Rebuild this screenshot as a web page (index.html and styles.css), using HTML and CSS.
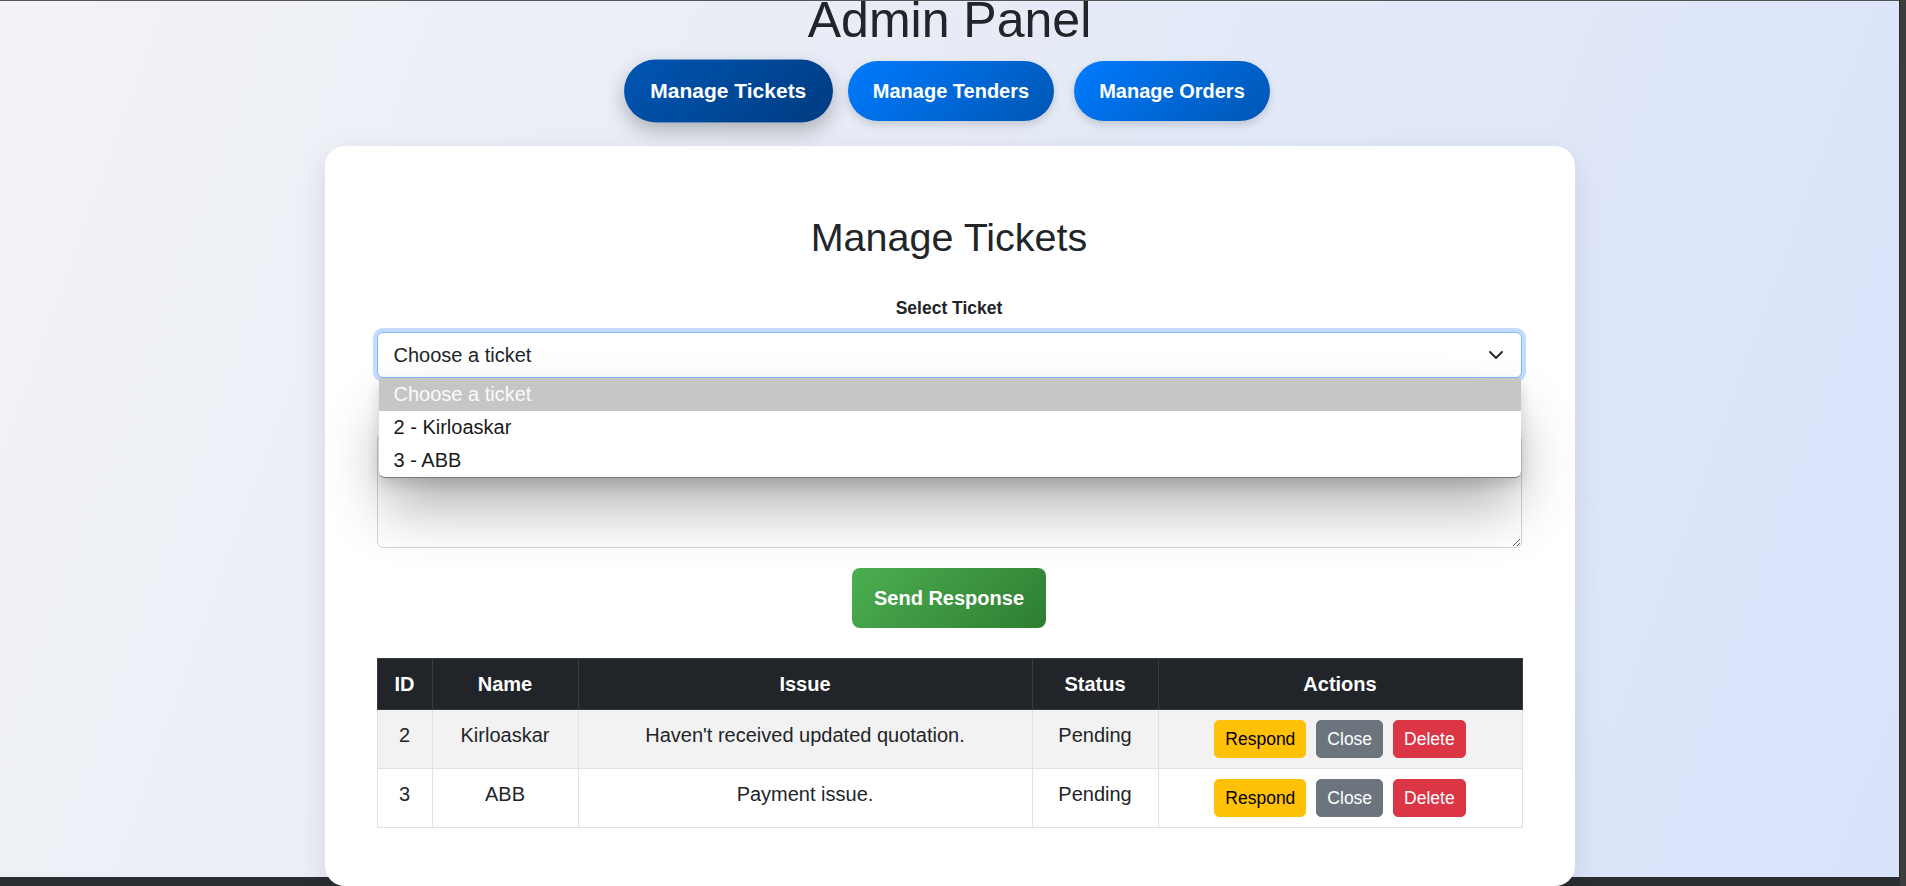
FILE: index.html
```html
<!DOCTYPE html>
<html lang="en">
<head>
<meta charset="utf-8">
<title>Admin Panel</title>
<link rel="stylesheet" href="styles.css">
</head>
<body>
<div class="frame">
  <div class="page">
    <h1 class="title">Admin Panel</h1>
    <nav class="tabs">
      <button class="tab tab-active">Manage Tickets</button>
      <button class="tab">Manage Tenders</button>
      <button class="tab">Manage Orders</button>
    </nav>
    <section class="card">
      <h2 class="card-title">Manage Tickets</h2>
      <label class="label label-select">Select Ticket</label>
      <div class="select-wrap">
        <div class="select">
          <span>Choose a ticket</span>
          <svg class="chevron" width="14" height="8" viewBox="0 0 14 8"><path d="M1 1 L7 7 L13 1" fill="none" stroke="#222" stroke-width="1.8" stroke-linecap="round" stroke-linejoin="round"/></svg>
        </div>
        <ul class="dropdown">
          <li class="option option-selected">Choose a ticket</li>
          <li class="option">2 - Kirloaskar</li>
          <li class="option">3 - ABB</li>
        </ul>
      </div>
      <label class="label label-response">Response</label>
      <textarea class="textarea"></textarea>
      <div class="send-row"><button class="send">Send Response</button></div>
      <table class="tickets">
        <colgroup>
          <col class="c-id"><col class="c-name"><col class="c-issue"><col class="c-status"><col class="c-actions">
        </colgroup>
        <thead>
          <tr><th>ID</th><th>Name</th><th>Issue</th><th>Status</th><th>Actions</th></tr>
        </thead>
        <tbody>
          <tr class="row-odd">
            <td>2</td><td>Kirloaskar</td><td>Haven't received updated quotation.</td><td>Pending</td>
            <td><div class="actions"><button class="btn btn-respond">Respond</button><button class="btn btn-close">Close</button><button class="btn btn-delete">Delete</button></div></td>
          </tr>
          <tr>
            <td>3</td><td>ABB</td><td>Payment issue.</td><td>Pending</td>
            <td><div class="actions"><button class="btn btn-respond">Respond</button><button class="btn btn-close">Close</button><button class="btn btn-delete">Delete</button></div></td>
          </tr>
        </tbody>
      </table>
    </section>
  </div>
</div>
</body>
</html>
```
FILE: styles.css
```css
html, body {
  margin: 0;
  padding: 0;
  overflow: hidden;
  background: #3d3d3d;
}
body {
  font-family: "Liberation Sans", Arial, sans-serif;
  color: #212529;
}
.frame {
  width: 1899px;
  height: 886px;
  overflow: hidden;
  background: #2a2d31;
  border-right: 1px solid #2c2c2c;
}
.page {
  width: 1899px;
  height: 876px;
  border-top: 1px solid #555;
  background: linear-gradient(110deg, #f2f3f6 0%, #e6ebf6 45%, #d8e3fb 100%);
  display: flex;
  flex-direction: column;
  align-items: center;
}
.title {
  margin: -10px 0 0;
  font-size: 50px;
  line-height: 58px;
  font-weight: 400;
  color: #212529;
}
.tabs {
  margin-top: 12px;
  display: flex;
  gap: 20px;
}
.tab {
  height: 60px;
  padding: 0 25px;
  border: none;
  border-radius: 30px;
  font-family: "Liberation Sans", Arial, sans-serif;
  font-size: 20px;
  font-weight: 700;
  color: #fff;
  background: linear-gradient(135deg, #007bff 0%, #0056b3 100%);
  box-shadow: 0 4px 10px rgba(0, 0, 0, 0.15);
}
.tab-active {
  background: linear-gradient(135deg, #0056b3 0%, #003b80 100%);
  transform: scale(1.05);
  box-shadow: 0 8px 18px rgba(0, 0, 0, 0.25);
}
.card {
  margin-top: 25px;
  width: 1250px;
  box-sizing: border-box;
  padding: 68px 53px 58px 52px;
  background: #fff;
  border-radius: 20px;
  box-shadow: 0 10px 30px rgba(0, 0, 0, 0.1);
  display: flex;
  flex-direction: column;
}
.card-title {
  margin: 0;
  font-size: 39.5px;
  line-height: 46px;
  font-weight: 400;
  text-align: center;
  color: #212529;
}
.label {
  display: block;
  text-align: center;
  font-size: 17.5px;
  line-height: 26px;
  font-weight: 700;
}
.label-select {
  margin: 35px 0 11px;
}
.select-wrap {
  position: relative;
}
.select {
  height: 46px;
  box-sizing: border-box;
  border: 1px solid #86b7fe;
  border-radius: 6px;
  box-shadow: 0 0 0 4px rgba(13, 110, 253, 0.25);
  padding: 0 18px 0 16px;
  display: flex;
  align-items: center;
  justify-content: space-between;
  font-size: 20px;
  background: #fff;
}
.dropdown {
  position: absolute;
  top: 46px;
  left: 2px;
  right: 1px;
  margin: 0;
  padding: 0;
  list-style: none;
  background: #fff;
  border-bottom: 1px solid #7a7a7a;
  border-radius: 0 0 6px 6px;
  box-shadow: 0 34px 60px -6px rgba(0, 0, 0, 0.32), 0 6px 14px rgba(0, 0, 0, 0.14);
  z-index: 5;
  overflow: hidden;
}
.option {
  height: 33px;
  line-height: 33px;
  padding-left: 15px;
  font-size: 20px;
  color: #1a1a1a;
}
.option-selected {
  background: #c6c6c6;
  color: #fafafa;
}
.label-response {
  margin: 20px 0 10px;
}
.textarea {
  height: 114px;
  box-sizing: border-box;
  border: 1px solid #ced4da;
  border-radius: 6px;
  background: #fff;
  resize: vertical;
  font-family: inherit;
  font-size: 20px;
}
.send-row {
  margin-top: 20px;
  display: flex;
  justify-content: center;
}
.send {
  height: 60px;
  padding: 0 22px;
  border: none;
  border-radius: 8px;
  font-family: "Liberation Sans", Arial, sans-serif;
  font-size: 20px;
  font-weight: 700;
  color: #fff;
  background: linear-gradient(135deg, #4caf50 0%, #2e7d32 100%);
}
.tickets {
  margin-top: 30px;
  width: 1145px;
  border-collapse: collapse;
  table-layout: fixed;
  font-size: 20px;
  line-height: 30px;
  border: 1px solid #dee2e6;
}
.c-id { width: 55px; }
.c-name { width: 146px; }
.c-issue { width: 454px; }
.c-status { width: 126px; }
.c-actions { width: 364px; }
.tickets th, .tickets td {
  padding: 10px;
  text-align: center;
  vertical-align: top;
  border: 1px solid #dee2e6;
}
.tickets th {
  background: #212529;
  color: #fff;
  font-weight: 700;
  border-color: #373b3e;
}
.tickets td {
  color: #212529;
}
.row-odd td {
  background: #f2f2f2;
}
.actions {
  display: flex;
  justify-content: center;
  gap: 10px;
}
.btn {
  font-family: "Liberation Sans", Arial, sans-serif;
  font-size: 17.5px;
  line-height: 26px;
  padding: 5px 10px;
  border: 1px solid transparent;
  border-radius: 5px;
}
.btn-respond { background: #ffc107; border-color: #ffc107; color: #000; }
.btn-close { background: #6c757d; border-color: #6c757d; color: #fff; }
.btn-delete { background: #dc3545; border-color: #dc3545; color: #fff; }
```
